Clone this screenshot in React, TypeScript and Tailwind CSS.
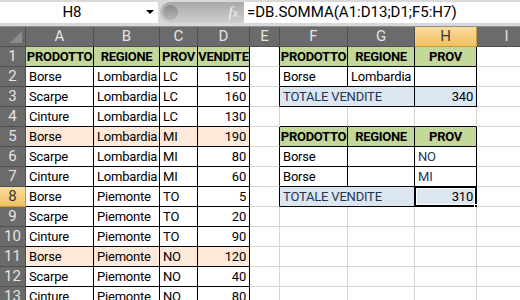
import React from 'react';

type Cell = {
  t?: string;
  a?: 'l' | 'r' | 'c';
  bg?: 'g' | 'p' | 'b';
  bold?: boolean;
  blue?: boolean;
  r?: boolean;
  bt?: boolean;
  span?: boolean;
  sel?: boolean;
};

const letters = ['A', 'B', 'C', 'D', 'E', 'F', 'G', 'H', 'I'];

const dataRows: [string, string, string, string, boolean][] = [
  ['Borse', 'Lombardia', 'LC', '150', false],
  ['Scarpe', 'Lombardia', 'LC', '160', false],
  ['Cinture', 'Lombardia', 'LC', '130', false],
  ['Borse', 'Lombardia', 'MI', '190', true],
  ['Scarpe', 'Lombardia', 'MI', '80', false],
  ['Cinture', 'Lombardia', 'MI', '60', false],
  ['Borse', 'Piemonte', 'TO', '5', false],
  ['Scarpe', 'Piemonte', 'TO', '20', false],
  ['Cinture', 'Piemonte', 'TO', '90', false],
  ['Borse', 'Piemonte', 'NO', '120', true],
  ['Scarpe', 'Piemonte', 'NO', '40', false],
  ['Cinture', 'Piemonte', 'NO', '80', false],
];

// colonne E..I per ogni riga (la prima riga è l'intestazione)
const rightSide: Cell[][] = [
  [
    { r: true },
    { t: 'PRODOTTO', a: 'c', bg: 'g', bold: true, r: true, bt: true },
    { t: 'REGIONE', a: 'c', bg: 'g', bold: true, r: true, bt: true },
    { t: 'PROV', a: 'c', bg: 'g', bold: true, r: true, bt: true },
    {},
  ],
  [
    { r: true },
    { t: 'Borse', r: true, bt: true },
    { t: 'Lombardia', r: true, bt: true },
    { r: true, bt: true },
    {},
  ],
  [
    { r: true },
    { t: 'TOTALE VENDITE', bg: 'b', blue: true, r: true, bt: true, span: true },
    { t: '340', a: 'r', bg: 'b', r: true, bt: true },
    {},
  ],
  [{}, { bt: true }, { bt: true }, { bt: true }, {}],
  [
    { r: true },
    { t: 'PRODOTTO', a: 'c', bg: 'g', bold: true, r: true, bt: true },
    { t: 'REGIONE', a: 'c', bg: 'g', bold: true, r: true, bt: true },
    { t: 'PROV', a: 'c', bg: 'g', bold: true, r: true, bt: true },
    {},
  ],
  [
    { r: true },
    { t: 'Borse', r: true, bt: true },
    { r: true, bt: true },
    { t: 'NO', blue: true, r: true, bt: true },
    {},
  ],
  [
    { r: true },
    { t: 'Borse', r: true, bt: true },
    { r: true, bt: true },
    { t: 'MI', blue: true, r: true, bt: true },
    {},
  ],
  [
    { r: true },
    { t: 'TOTALE VENDITE', bg: 'b', blue: true, r: true, bt: true, span: true },
    { t: '310', a: 'r', bg: 'b', r: true, bt: true, sel: true },
    {},
  ],
];

const empty: Cell[] = [{}, {}, {}, {}, {}];

function SheetCell({ c }: { c: Cell }) {
  const align = c.a === 'r' ? 'justify-end pr-[3px]' : c.a === 'c' ? 'justify-center' : 'justify-start pl-[3px]';
  const bg = c.bg === 'g' ? 'bg-[#c4d79b]' : c.bg === 'p' ? 'bg-[#fde9d9]' : c.bg === 'b' ? 'bg-[#dce6f1]' : 'bg-white';
  const br = c.r ? 'border-r-black' : 'border-r-[#d4d4d4]';
  const bb = c.bt ? 'border-b-black' : 'border-b-[#d4d4d4]';
  return (
    <div
      className={`relative flex items-end h-[20px] border-r border-b whitespace-nowrap ${align} ${bg} ${br} ${bb} ${c.span ? 'col-span-2' : ''} ${c.bold ? 'font-bold tracking-[-0.3px]' : 'tracking-[-0.2px]'} ${c.blue ? 'text-[#1f3553]' : 'text-black'}`}
    >
      <span className="leading-[18px]">{c.t}</span>
      {c.sel && (
        <>
          <div className="absolute -left-[1px] -top-[1px] -right-[1px] -bottom-[1px] border-2 border-black shadow-[inset_0_0_0_1px_#ffffff]" />
          <div className="absolute -right-[3px] -bottom-[3px] w-[5px] h-[5px] bg-black border border-white" />
        </>
      )}
    </div>
  );
}

function FormulaBar() {
  return (
    <div className="h-[27px] bg-[#d9d9d9] border-b border-[#8f8f8f] pt-[2px]">
      <div className="flex h-[21px]">
        <div className="relative w-[158px] bg-white flex items-center justify-center text-[15px] text-black">
          <span className="-ml-[14px]">H8</span>
          <div className="absolute right-[4px] top-[8px] w-0 h-0 border-l-[4px] border-r-[4px] border-t-[4px] border-l-transparent border-r-transparent border-t-black" />
        </div>
        <div className="w-[86px] flex items-center pl-[2px]">
          <div className="relative flex-1 h-[21px] rounded-l-full bg-gradient-to-b from-[#a9a9a9] to-[#cfcfcf] flex items-center justify-end pr-[6px]">
            <div className="absolute left-[3px] top-[3px] w-[15px] h-[15px] rounded-full bg-gradient-to-b from-[#8a8a8a] to-[#b8b8b8]" />
            <span className="italic text-[15px] text-[#f2f2f2] font-['Liberation_Serif',serif]">
              f<span className="text-[12px]">x</span>
            </span>
          </div>
        </div>
        <div className="flex-1 bg-white flex items-center pl-[3px] text-[15px] text-black">
          =DB.SOMMA(A1:D13;D1;F5:H7)
        </div>
      </div>
    </div>
  );
}

const headSel = 'bg-gradient-to-b from-[#f9dc9f] to-[#f1c15f] text-[#3a3a3a] border-[#c89b3c]';
const headNorm = 'bg-[#6b6b6b] text-[#e4e4e4] border-[#505050]';

export default function App() {
  return (
    <div className="w-[520px] h-[300px] overflow-hidden bg-white font-['Roboto',sans-serif] text-[13px]">
      <FormulaBar />
      <div className="grid grid-cols-[26px_68px_66px_38px_52px_30px_68px_67px_62px_60px]">
        {/* angolo */}
        <div className="relative h-[20px] bg-[#6b6b6b] border-r border-b border-[#505050]">
          <div className="absolute right-[3px] bottom-[3px] w-0 h-0 border-l-[12px] border-l-transparent border-b-[12px] border-b-[#8c8c8c]" />
        </div>
        {letters.map((l) => (
          <div
            key={l}
            className={`h-[20px] flex items-center justify-center text-[15px] border-r border-b ${l === 'H' ? headSel : headNorm}`}
          >
            {l}
          </div>
        ))}
        {Array.from({ length: 13 }).map((_, i) => {
          const n = i + 1;
          const left: Cell[] =
            n === 1
              ? ['PRODOTTO', 'REGIONE', 'PROV', 'VENDITE'].map((t) => ({ t, a: 'c', bg: 'g', bold: true, r: true, bt: true }))
              : (() => {
                  const d = dataRows[n - 2];
                  const bg = d[4] ? ('p' as const) : undefined;
                  return [
                    { t: d[0], bg, r: true, bt: true },
                    { t: d[1], bg, r: true, bt: true },
                    { t: d[2], bg, r: true, bt: true },
                    { t: d[3], a: 'r' as const, bg, r: true, bt: true },
                  ];
                })();
          const right = rightSide[i] ?? empty;
          return (
            <React.Fragment key={n}>
              <div className={`h-[20px] flex items-center justify-center text-[15px] border-r border-b ${n === 8 ? headSel : headNorm}`}>
                {n}
              </div>
              {[...left, ...right].map((c, j) => (
                <SheetCell key={j} c={c} />
              ))}
            </React.Fragment>
          );
        })}
      </div>
    </div>
  );
}
